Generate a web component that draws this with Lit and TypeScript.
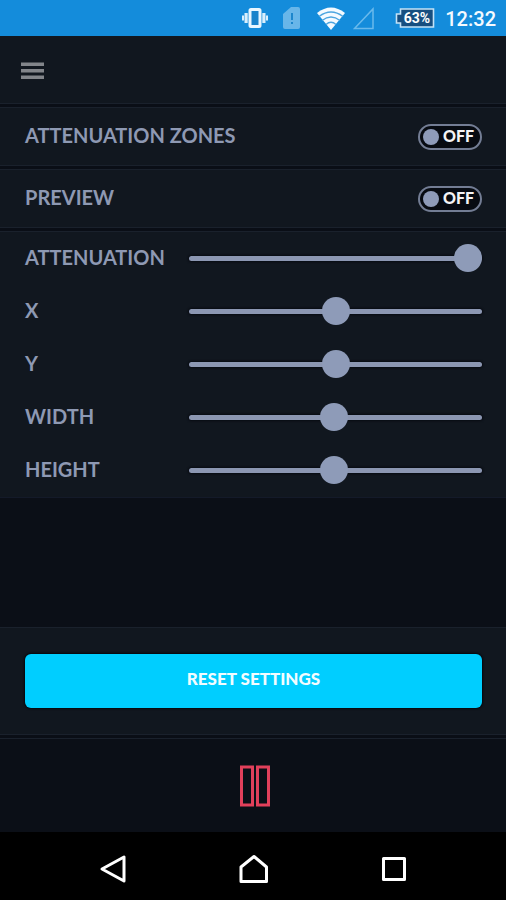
import { LitElement, html, css } from "lit";
import { customElement, state } from "lit/decorators.js";

@customElement("status-bar")
class StatusBar extends LitElement {
  static styles = css`
    :host {
      display: flex;
      justify-content: flex-end;
      align-items: center;
      height: 36px;
      padding-right: 10px;
      background: #148cdb;
      color: #f4faff;
      font-family: Roboto, sans-serif;
    }
    svg {
      display: block;
      flex: none;
    }
    .vibrate { margin-right: 14px; }
    .sim { margin-right: 16px; }
    .wifi { margin-right: 8px; }
    .signal { margin-right: 20px; }
    .battery { margin-right: 10px; }
    .percent {
      font: 700 14px Roboto, sans-serif;
      fill: #ffffff;
      text-anchor: middle;
    }
    .time {
      font-size: 20px;
      line-height: 24px;
      font-weight: 500;
      padding-top: 2px;
    }
  `;

  render() {
    return html`
      <svg class="vibrate" width="28" height="24" viewBox="0 0 28 24" fill="#d9effd" role="img" aria-label="Vibrate">
        <rect x="9" y="3.5" width="10" height="17" rx="1" fill="#1a83cb" stroke="#e9f6ff" stroke-width="3" />
        <rect x="3.5" y="7" width="3.200" height="10" />
        <rect x="1" y="9.500" width="2" height="5" />
        <rect x="21.300" y="7" width="3.200" height="10" />
        <rect x="25" y="9.500" width="2" height="5" />
      </svg>
      <svg class="sim" width="18" height="24" viewBox="0 0 18 24" role="img" aria-label="No SIM">
        <path d="M8 1h7a2 2 0 0 1 2 2v18a2 2 0 0 1-2 2H2a2 2 0 0 1-2-2V8z" fill="#68b6e9" />
        <path d="M8 7h2v7H8zM8 16h2v2H8z" fill="#1c86cc" />
      </svg>
      <svg class="wifi" width="28" height="24" viewBox="0 0 28 24" role="img" aria-label="Wi-Fi">
        <path d="M0 7Q14-4 28 7L14 24z" fill="#f4faff" />
        <path d="M2 10.500Q14 1.500 26 10.500M5 14.500Q14 7.500 23 14.500M9 18.500Q14 14 19 18.500" fill="none" stroke="#4ca5e0" stroke-width="1.300" />
      </svg>
      <svg class="signal" width="22" height="24" viewBox="0 0 22 24" role="img" aria-label="No signal">
        <path d="M20 3v19.500H1.500z" fill="none" stroke="#69b9ec" stroke-width="1.500" />
      </svg>
      <svg class="battery" width="40" height="24" viewBox="0 0 40 24" role="img" aria-label="Battery 63%">
        <path d="M5.500 3H38.500V21H5.500V17H1.500V8H5.500z" fill="#174f80" stroke="#c4e2f6" stroke-width="1.600" />
        <text class="percent" x="22" y="17">63%</text>
      </svg>
      <span class="time">12:32</span>
    `;
  }
}

interface Zone {
  id: string;
  label: string;
  value: number;
}

@customElement("app-root")
class AppRoot extends LitElement {
  @state() private zones = false;
  @state() private preview = false;
  @state() private sliders: Zone[] = [
    { id: "attenuation", label: "ATTENUATION", value: 100 },
    { id: "x", label: "X", value: 50 },
    { id: "y", label: "Y", value: 50 },
    { id: "width", label: "WIDTH", value: 49.5 },
    { id: "height", label: "HEIGHT", value: 49.5 },
  ];

  static styles = css`
    :host {
      display: flex;
      flex-direction: column;
      min-height: 100vh;
      background: #0b0f17;
      color: #8e99b3;
      font-family: Lato, sans-serif;
      --panel: #11171f;
      --line: #1a212c;
      --groove: #0a0e16;
    }
    * { box-sizing: border-box; }
    button {
      margin: 0;
      padding: 0;
      border: 0;
      background: none;
      font: inherit;
      color: inherit;
      cursor: pointer;
    }
    svg { display: block; }
    main {
      flex: 1;
      display: flex;
      flex-direction: column;
    }
    header {
      display: flex;
      align-items: center;
      height: 68px;
      padding: 3px 20px 0;
      background: var(--panel);
      border-bottom: 1px solid var(--line);
    }
    .seam {
      flex: none;
      height: 3px;
      background: var(--groove);
    }
    .row {
      display: flex;
      align-items: center;
      justify-content: space-between;
      height: 59px;
      padding: 0 24px 0 25px;
      background: var(--panel);
      border-top: 1px solid var(--line);
      border-bottom: 1px solid var(--line);
    }
    .name {
      font-size: 20px;
      line-height: 24px;
      font-weight: 700;
      padding-bottom: 4px;
    }
    .switch {
      display: flex;
      align-items: center;
      gap: 4px;
      width: 64px;
      height: 26px;
      padding: 0 4px 0 3px;
      border: 2px solid #737d94;
      border-radius: 13px;
      background: #070b12;
      color: #f3f3f5;
      font-size: 16px;
      line-height: 18px;
      font-weight: 900;
      cursor: pointer;
    }
    .switch input {
      appearance: none;
      flex: none;
      width: 16px;
      height: 16px;
      margin: 0;
      border-radius: 50%;
      background: #8e9bb9;
    }
    .switch.on { flex-direction: row-reverse; justify-content: space-between; }
    .switch span { padding-bottom: 2px; }
    .sliders {
      padding: 0 24px 0 25px;
      background: var(--panel);
      border-top: 1px solid var(--line);
      border-bottom: 1px solid #141a29;
    }
    .slider {
      display: grid;
      grid-template-columns: 164px 1fr;
      align-items: center;
      height: 53px;
    }
    .slider input {
      appearance: none;
      width: 100%;
      height: 30px;
      margin: 0;
      background: transparent;
    }
    .slider input::-webkit-slider-runnable-track {
      height: 5px;
      border-radius: 3px;
      background: #8c97b2;
      box-shadow: 0 0 2px 1px #080b12;
    }
    .slider input::-webkit-slider-thumb {
      appearance: none;
      width: 28px;
      height: 28px;
      margin-top: -12px;
      border-radius: 50%;
      background: #8e9bb8;
    }
    .reset {
      margin-top: auto;
      padding: 26px 24px 26px 25px;
      background: var(--panel);
      border-top: 1px solid var(--line);
      border-bottom: 1px solid var(--line);
    }
    .reset button {
      display: block;
      width: 100%;
      height: 54px;
      padding-bottom: 4px;
      border-radius: 6px;
      background: #00ceff;
      box-shadow: 0 0 2px 1px #05080d;
      color: #f2fcff;
      font-size: 17px;
      line-height: 20px;
      font-weight: 900;
    }
    .playback {
      display: flex;
      justify-content: center;
      align-items: center;
      height: 94px;
      border-top: 1px solid var(--line);
    }
    nav {
      display: flex;
      justify-content: center;
      gap: 112px;
      align-items: center;
      height: 68px;
      padding-top: 6px;
      background: #000000;
    }
  `;

  private setValue(id: string, e: Event) {
    const value = Number((e.target as HTMLInputElement).value);
    this.sliders = this.sliders.map((s) => (s.id === id ? { ...s, value } : s));
  }

  private reset() {
    this.zones = false;
    this.preview = false;
    this.sliders = this.sliders.map((s) => ({ ...s, value: s.id === "attenuation" ? 100 : 50 }));
  }

  private toggle(id: string, label: string, on: boolean, change: () => void) {
    return html`
      <div class="row">
        <label class="name" for=${id}>${label}</label>
        <label class="switch ${on ? "on" : ""}">
          <input id=${id} type="checkbox" role="switch" .checked=${on} @change=${change} />
          <span>${on ? "ON" : "OFF"}</span>
        </label>
      </div>
      <div class="seam"></div>
    `;
  }

  render() {
    return html`
      <status-bar></status-bar>
      <main>
        <header>
          <button aria-label="Menu">
            <svg width="25" height="18" viewBox="0 0 25 18" fill="#82858a">
              <path d="M1 .500h23v3.500H1zM1 7h23v3.500H1zM1 13.500h23v3.500H1z" />
            </svg>
          </button>
        </header>
        <div class="seam"></div>
        ${this.toggle("zones", "ATTENUATION ZONES", this.zones, () => (this.zones = !this.zones))}
        ${this.toggle("preview", "PREVIEW", this.preview, () => (this.preview = !this.preview))}
        <div class="sliders">
          ${this.sliders.map(
            (s) => html`
              <div class="slider">
                <label class="name" for=${s.id}>${s.label}</label>
                <input
                  id=${s.id}
                  type="range"
                  min="0"
                  max="100"
                  step="any"
                  .value=${String(s.value)}
                  @input=${(e: Event) => this.setValue(s.id, e)}
                />
              </div>
            `
          )}
        </div>
        <div class="reset">
          <button @click=${this.reset}>RESET SETTINGS</button>
        </div>
      </main>
      <div class="seam"></div>
      <div class="playback">
        <button aria-label="Pause">
          <svg width="34" height="42" viewBox="0 0 34 42" fill="none" stroke="#e2405b" stroke-width="3">
            <path d="M5.500 2h11v38h-11zM21.500 2h11v38h-11z" />
          </svg>
        </button>
      </div>
      <nav aria-label="System">
        <button aria-label="Back">
          <svg width="28" height="30" viewBox="0 0 28 30" fill="none" stroke="#ffffff" stroke-width="3" stroke-linejoin="round">
            <path d="M25 3v24L3 15z" />
          </svg>
        </button>
        <button aria-label="Home">
          <svg width="30" height="30" viewBox="0 0 30 30" fill="none" stroke="#ffffff" stroke-width="3" stroke-linejoin="round">
            <path d="M2 27.500V13L15 2.500 27.500 13v14.500z" />
          </svg>
        </button>
        <button aria-label="Recent apps">
          <svg width="26" height="26" viewBox="0 0 26 26" fill="none" stroke="#ffffff" stroke-width="3" stroke-linejoin="round">
            <path d="M2.500 2.500h21v21h-21z" />
          </svg>
        </button>
      </nav>
    `;
  }
}
